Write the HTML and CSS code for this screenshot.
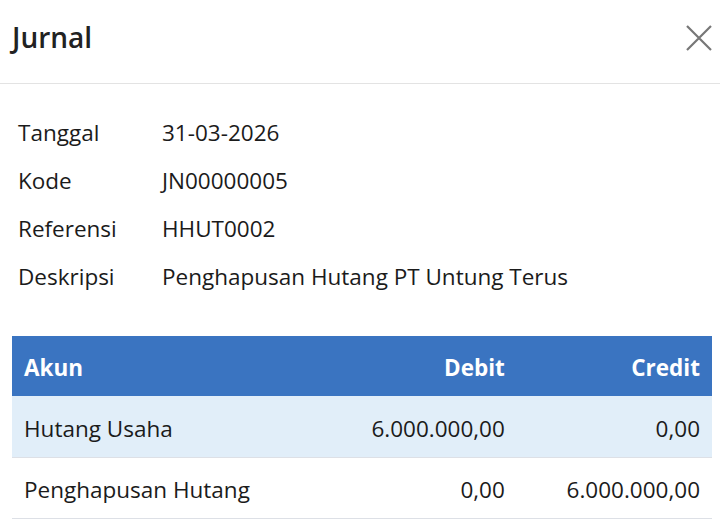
FILE: index.html
```html
<!DOCTYPE html>
<html lang="id">

<head>
    <meta charset="UTF-8">
    <title>Jurnal</title>
    <link rel="stylesheet" href="styles.css">
</head>

<body>
    <div class="modal">
        <div class="modal-header">
            <h1>Jurnal</h1>
            <button class="close-btn" aria-label="Tutup">
                <svg width="26" height="26" viewBox="0 0 26 26">
                    <path d="M1 1L25 25M25 1L1 25" stroke="#777" stroke-width="2.2" fill="none" />
                </svg>
            </button>
        </div>

        <div class="modal-body">
            <div class="info">
                <div class="info-row"><span class="label">Tanggal</span><span>31-03-2026</span></div>
                <div class="info-row"><span class="label">Kode</span><span>JN00000005</span></div>
                <div class="info-row"><span class="label">Referensi</span><span>HHUT0002</span></div>
                <div class="info-row"><span class="label">Deskripsi</span><span>Penghapusan Hutang PT Untung Terus</span></div>
            </div>

            <table class="jurnal-table">
                <thead>
                    <tr>
                        <th>Akun</th>
                        <th class="num">Debit</th>
                        <th class="num">Credit</th>
                    </tr>
                </thead>
                <tbody>
                    <tr class="highlight">
                        <td>Hutang Usaha</td>
                        <td class="num">6.000.000,00</td>
                        <td class="num">0,00</td>
                    </tr>
                    <tr>
                        <td>Penghapusan Hutang</td>
                        <td class="num">0,00</td>
                        <td class="num">6.000.000,00</td>
                    </tr>
                </tbody>
            </table>
        </div>
    </div>
</body>

</html>
```

FILE: styles.css
```css
* {
    box-sizing: border-box;
}

body {
    margin: 0;
    font-family: "Open Sans", "Noto Sans", sans-serif;
    color: #1b1b1b;
    background: white;
}

.modal {
    width: 720px;
}

.modal-header {
    display: flex;
    align-items: center;
    justify-content: space-between;
    height: 84px;
    padding: 0 8px 0 12px;
    border-bottom: 1px solid #e3e3e3;
}

.modal-header h1 {
    margin: 0;
    font-size: 28px;
    font-weight: 600;
    color: #222;
    padding-bottom: 10px;
}

.close-btn {
    background: none;
    border: none;
    padding: 0;
    cursor: pointer;
    display: flex;
    margin-bottom: 8px;
}

.modal-body {
    padding: 24px 8px 0 12px;
}

.info {
    padding-left: 6px;
    margin-bottom: 36px;
}

.info-row {
    display: flex;
    height: 48px;
    align-items: center;
    font-size: 22.5px;
}

.info-row .label {
    width: 144px;
}

.jurnal-table {
    width: 700px;
    border-collapse: collapse;
    font-size: 22.5px;
}

.jurnal-table th {
    background: #3a74c1;
    color: white;
    font-weight: 700;
    text-align: left;
    height: 60px;
    padding: 2px 12px 0;
}

.jurnal-table td {
    height: 61px;
    padding: 4px 12px 0;
    border-bottom: 1px solid #dde0e6;
}

.jurnal-table .num {
    text-align: right;
}

.jurnal-table tr.highlight td {
    background: #e1eef9;
}
```
